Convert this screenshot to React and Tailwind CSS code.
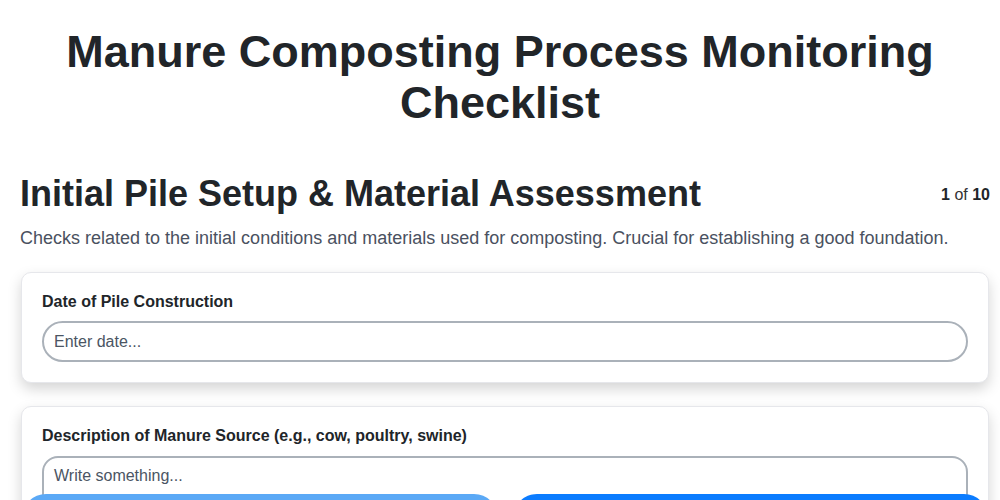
import { useState } from "react";

export default function App() {
  const [date, setDate] = useState("");
  const [source, setSource] = useState("");

  return (
    <div className="min-h-screen bg-white font-['Liberation_Sans',Arial,sans-serif] text-[#212529]">
      <h1 className="pt-[26px] text-center text-[45px] font-bold leading-[51px] px-[50px]">
        Manure Composting Process Monitoring Checklist
      </h1>

      <div className="pl-5 pr-[10px] mt-[46px]">
        {/* Section header */}
        <div className="flex items-start justify-between">
          <h2 className="text-4xl font-bold leading-10">Initial Pile Setup &amp; Material Assessment</h2>
          <span className="mt-[9px] text-base text-[#333]">
            <b className="text-[#212529]">1</b> of <b className="text-[#212529]">10</b>
          </span>
        </div>
        <p className="mt-[10px] text-[18px] leading-7 text-[#4a5160]">
          Checks related to the initial conditions and materials used for composting. Crucial for establishing a good foundation.
        </p>

        <div className="mt-5 flex flex-col gap-[23px] mx-[1px]">
          <div className="rounded-[10px] border border-[#e6e7eb] bg-white px-5 pt-[19px] pb-5 shadow-[0_6px_14px_rgba(0,0,0,0.17)]">
            <label className="block text-base font-bold leading-5">Date of Pile Construction</label>
            <input
              value={date}
              onChange={(e) => setDate(e.target.value)}
              placeholder="Enter date..."
              className="mt-[9px] block h-[41px] w-full rounded-full border-2 border-[#aab1b9] px-[10px] text-base text-[#333] placeholder:text-[#4b5563] outline-none"
            />
          </div>

          <div className="rounded-[10px] border border-[#e6e7eb] bg-white px-5 pt-[19px] pb-5 shadow-[0_6px_14px_rgba(0,0,0,0.17)]">
            <label className="block text-base font-bold leading-5">
              Description of Manure Source (e.g., cow, poultry, swine)
            </label>
            <textarea
              value={source}
              onChange={(e) => setSource(e.target.value)}
              placeholder="Write something..."
              rows={4}
              className="mt-[10px] block w-full resize-none rounded-[16px] border-2 border-[#aab1b9] px-[10px] py-[6px] text-base text-[#333] placeholder:text-[#4b5563] outline-none"
            />
          </div>
        </div>
      </div>

      <div className="fixed left-[22px] right-[12px] top-[494px] flex gap-[15px]">
        <button aria-label="Previous" className="h-12 flex-1 rounded-full bg-[#5ba9f6]" />
        <button aria-label="Next" className="h-12 flex-1 rounded-full bg-[#0b7cff]" />
      </div>
    </div>
  );
}
